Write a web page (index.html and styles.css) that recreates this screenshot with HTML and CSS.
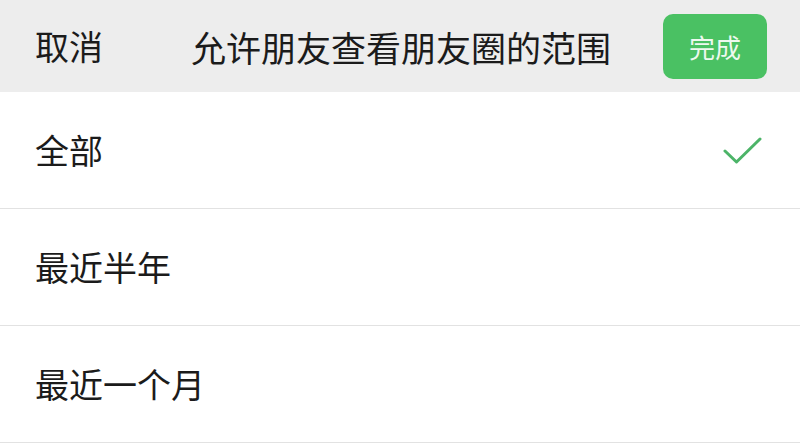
FILE: index.html
```html
<!DOCTYPE html>
<html lang="zh-CN">
<head>
<meta charset="utf-8">
<title>允许朋友查看朋友圈的范围</title>
<link rel="stylesheet" href="styles.css">
</head>
<body>
<header class="nav">
  <span class="nav-cancel">取消</span>
  <span class="nav-title">允许朋友查看朋友圈的范围</span>
  <button class="nav-done">完成</button>
</header>
<ul class="options">
  <li class="option">
    <span class="option-label">全部</span>
    <svg class="check" width="40" height="30" viewBox="0 0 40 30" aria-hidden="true">
      <path d="M2 15 L13.5 26 L37 3" fill="none" stroke="#4cb468" stroke-width="3" stroke-linecap="round" stroke-linejoin="round"/>
    </svg>
  </li>
  <li class="option"><span class="option-label">最近半年</span></li>
  <li class="option"><span class="option-label">最近一个月</span></li>
</ul>
</body>
</html>
```
FILE: styles.css
```css
* { box-sizing: border-box; }
html, body {
  margin: 0;
  padding: 0;
  background: #ffffff;
  font-family: "Noto Sans CJK SC", "Noto Sans", sans-serif;
  color: #1b1b1b;
  overflow: hidden;
}
.nav {
  height: 92px;
  background: #ededed;
  display: grid;
  grid-template-columns: 1fr auto 1fr;
  align-items: center;
  padding: 0 33px 0 35px;
}
.nav-cancel {
  justify-self: start;
  font-size: 34px;
  line-height: 1;
}
.nav-title {
  font-size: 35px;
  line-height: 1;
}
.nav-done {
  justify-self: end;
  width: 104px;
  height: 65px;
  margin-top: 1px;
  border: none;
  border-radius: 10px;
  background: #4ac163;
  color: #eef9ef;
  font-family: inherit;
  font-size: 26px;
  padding: 0;
  line-height: 1;
}
.options {
  list-style: none;
  margin: 0;
  padding: 0;
}
.option {
  height: 117px;
  border-bottom: 1px solid #e2e2e2;
  display: flex;
  align-items: center;
  justify-content: space-between;
  padding: 0 37px 0 35px;
}
.option-label {
  font-size: 34px;
  line-height: 1;
}
.check {
  display: block;
  margin-top: 2px;
}
```
